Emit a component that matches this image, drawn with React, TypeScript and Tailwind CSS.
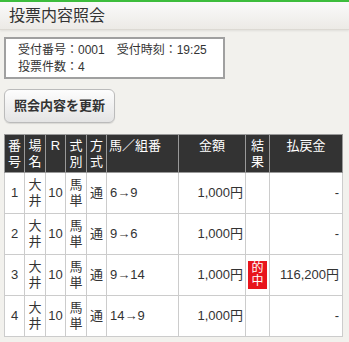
const rows = [
  { no: '1', kumi: '6→9', pay: '-', hit: false },
  { no: '2', kumi: '9→6', pay: '-', hit: false },
  { no: '3', kumi: '9→14', pay: '116,200円', hit: true },
  { no: '4', kumi: '14→9', pay: '-', hit: false },
]

function Stack({ a, b }: { a: string; b: string }) {
  return (
    <div className="flex flex-col items-center leading-[16px]">
      <span>{a}</span>
      <span>{b}</span>
    </div>
  )
}

export default function App() {
  const th = 'border border-[#999] bg-[#333] text-white font-normal align-top pt-[3px] text-[13px]'
  const td = 'border border-[#ccc] bg-white text-[13px] text-[#333] align-middle h-[41px]'
  return (
    <div
      className="w-[349px] h-[342px] bg-[#f2f1ed] overflow-hidden"
      style={{ fontFamily: '"Liberation Sans", "Noto Sans CJK JP", sans-serif' }}
    >
      {/* title bar */}
      <div className="border-t-2 border-[#3dbd3d] h-[30px] bg-gradient-to-b from-[#fafafa] to-[#eceae6] border-b border-b-[#dcd9d3] shadow-[0_1px_2px_rgba(0,0,0,0.08)] flex items-center pl-[9px]">
        <span className="text-[16px] text-[#333]">投票内容照会</span>
      </div>

      <div className="px-[4px] pt-[7px]">
        {/* info box */}
        <div className="w-[221px] h-[42px] bg-white border-2 border-[#a0a0a0] pl-[12px] pt-[3px] text-[12px] text-[#333] leading-[17px] whitespace-nowrap">
          <div>受付番号：0001　受付時刻：19:25</div>
          <div>投票件数：4</div>
        </div>

        {/* refresh button */}
        <button className="mt-[10px] w-[111px] h-[34px] rounded-[6px] border border-[#bbb] bg-gradient-to-b from-[#fdfdfd] to-[#e4e4e4] text-[13px] font-bold text-[#333] shadow-[0_1px_1px_rgba(0,0,0,0.1)] whitespace-nowrap">
          照会内容を更新
        </button>

        {/* result table */}
        <table className="mt-[11px] border-collapse w-[338px] table-fixed">
          <colgroup>
            <col className="w-[20px]" />
            <col className="w-[21px]" />
            <col className="w-[20px]" />
            <col className="w-[21px]" />
            <col className="w-[20px]" />
            <col className="w-[72px]" />
            <col className="w-[67px]" />
            <col className="w-[24px]" />
            <col className="w-[73px]" />
          </colgroup>
          <thead>
            <tr className="h-[38px]">
              <th className={th}><Stack a="番" b="号" /></th>
              <th className={th}><Stack a="場" b="名" /></th>
              <th className={th + ' leading-[16px]'}>R</th>
              <th className={th}><Stack a="式" b="別" /></th>
              <th className={th}><Stack a="方" b="式" /></th>
              <th className={th + ' text-left pl-[2px] leading-[16px]'}>馬／組番</th>
              <th className={th + ' leading-[16px]'}>金額</th>
              <th className={th}><Stack a="結" b="果" /></th>
              <th className={th + ' leading-[16px]'}>払戻金</th>
            </tr>
          </thead>
          <tbody>
            {rows.map(r => (
              <tr key={r.no}>
                <td className={td + ' text-center'}>{r.no}</td>
                <td className={td}><Stack a="大" b="井" /></td>
                <td className={td + ' text-center'}>10</td>
                <td className={td}><Stack a="馬" b="単" /></td>
                <td className={td + ' text-center'}>通</td>
                <td className={td + ' pl-[3px]'}>{r.kumi}</td>
                <td className={td + ' text-right pr-[2px]'}>1,000円</td>
                <td className={td}>
                  {r.hit && (
                    <div className="mx-auto w-[19px] bg-[#e8141c] text-white flex flex-col items-center leading-[13px] py-[1px] text-[12px]">
                      <span>的</span>
                      <span>中</span>
                    </div>
                  )}
                </td>
                <td className={td + ' text-right pr-[3px]'}>{r.pay}</td>
              </tr>
            ))}
          </tbody>
        </table>
      </div>
    </div>
  )
}
